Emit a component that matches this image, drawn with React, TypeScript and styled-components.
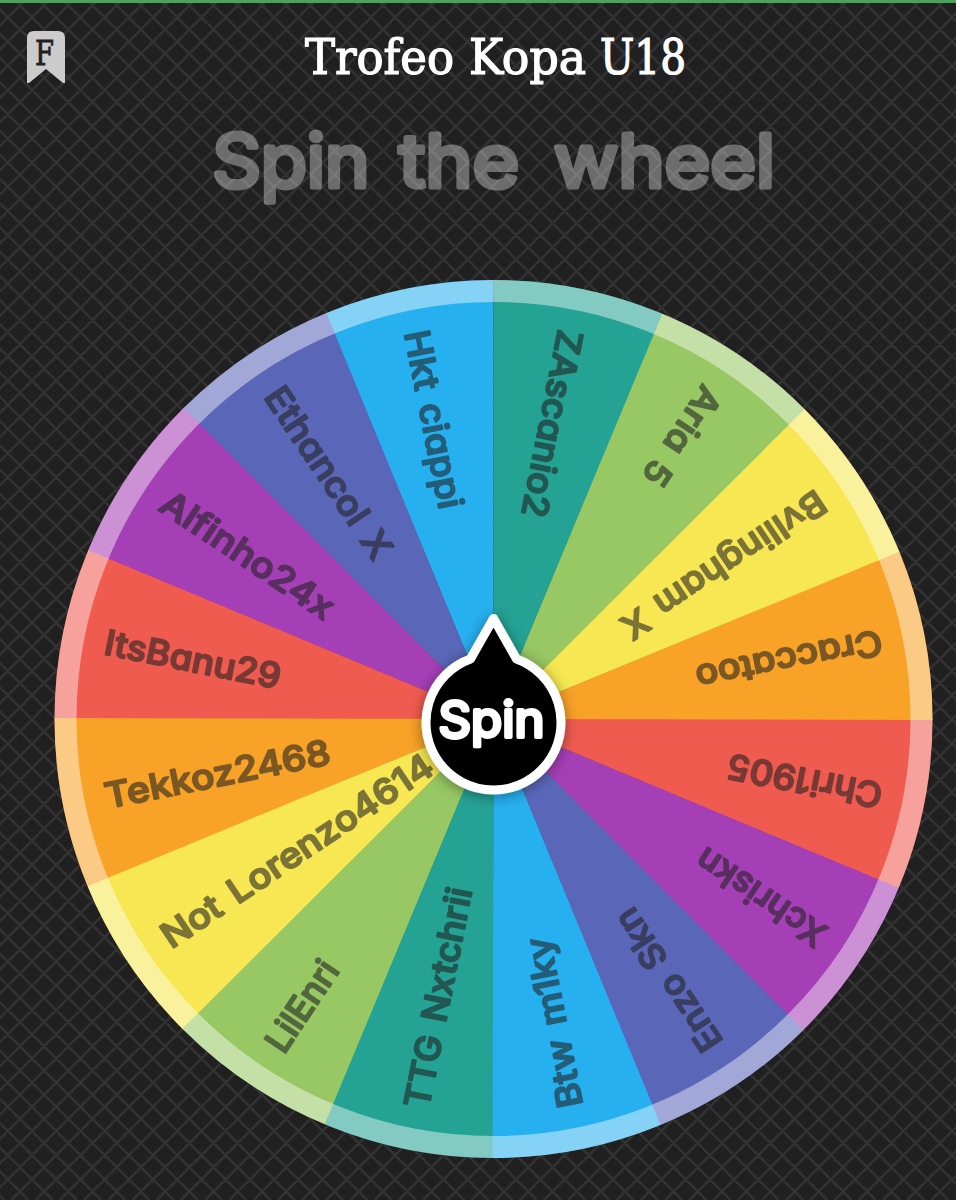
import React from "react";
import styled, { createGlobalStyle } from "styled-components";

const Global = createGlobalStyle`
  * { box-sizing: border-box; }
  body { margin: 0; background: #202020; }
`;

const Page = styled.main`
  position: relative;
  isolation: isolate;
  width: 956px;
  height: 1200px;
  overflow: hidden;
  display: flex;
  flex-direction: column;
  border-top: 3px solid #49a35a;
  background: #202020;
`;

const Weave = styled.svg`
  position: absolute;
  inset: -3px 0 0 0;
  z-index: -1;
  width: 956px;
  height: 1200px;
`;

const Header = styled.header`
  display: flex;
  align-items: flex-start;
  height: 107px;
  padding: 28px 27px 0;
`;

const Bookmark = styled.svg`
  flex: none;
  width: 38px;
  height: 53px;
`;

const Title = styled.svg`
  flex: none;
  width: 600px;
  height: 76px;
  margin-left: 132px;
  margin-top: -8px;
  overflow: visible;
  font-family: "Roboto Slab", "DejaVu Serif Condensed", "DejaVu Serif", serif;
  font-stretch: condensed;
`;

const Tagline = styled.svg`
  display: block;
  flex: none;
  width: 956px;
  height: 150px;
  opacity: 0.34;
  font-family: Inter, sans-serif;
  font-weight: 400;
`;

const Wheel = styled.svg`
  display: block;
  flex: none;
  width: 956px;
  height: 940px;
  font-family: Inter, sans-serif;
  font-feature-settings: "cv11";
`;

const Label = styled.text`
  font-size: 35px;
  font-weight: 500;
  word-spacing: 4px;
  fill: #222;
  stroke: #222;
  stroke-width: 1.9px;
  stroke-linecap: round;
  stroke-linejoin: round;
`;

const SpinText = styled.text`
  font-size: 49px;
  font-weight: 400;
  fill: #fff;
  stroke: #fff;
  stroke-width: 3.8px;
  stroke-linejoin: round;
`;

const teal = "#24a294", lime = "#97c864", yellow = "#f7e752", orange = "#f8a227";
const red = "#f05b50", purple = "#a53fb6", indigo = "#5a67b9", sky = "#27b0f0";

const slices: [string, string, number][] = [
  ["ZAscanio2", teal, 190], ["Aria 5", lime, 112], ["Bvllingham X", yellow, 238],
  ["Craccatoo", orange, 189], ["Chri1905", red, 157], ["Xchriskn", purple, 149],
  ["Enzo Skn", indigo, 164], ["Btw m1ky", sky, 173], ["TTG Nxtchrii", teal, 224],
  ["LilEnri", lime, 102], ["Not Lorenzo4614", yellow, 319], ["Tekkoz2468", orange, 229],
  ["ItsBanu29", red, 179], ["Alfinho24x", purple, 201], ["Ethancol X", indigo, 199],
  ["Hkt ciappi", sky, 181],
];

const point = (r: number, deg: number) => {
  const a = (deg * Math.PI) / 180;
  return `${(r * Math.sin(a)).toFixed(2)} ${(-r * Math.cos(a)).toFixed(2)}`;
};
// Each wedge runs a hair under its neighbour so no seam shows between them
const wedge = (r: number, i: number) => {
  const overlap = i < 15 ? 0.12 : 0;
  return `M0 0L${point(r, i * 22.5)}A${r} ${r} 0 0 1 ${point(r, (i + 1) * 22.5 + overlap)}Z`;
};

// Diagonal threads crossing every 24.21px
const step = 24.21;
const threads = Array.from({ length: 92 }, (_, i) => {
  const down = 14.6 + (i - 51) * step;
  const up = 25.2 + (i - 1) * step;
  return `M${down} 0l1200 1200M${up} 0l-1200 1200`;
}).join("");

export default function App() {
  return (
    <>
      <Global />
      <Page>
        <Weave viewBox="0 0 956 1200">
          <path d={threads} stroke="#323232" strokeWidth="2.6" />
        </Weave>
        <Header>
          <Bookmark viewBox="0 0 38 53">
            <path d="M0 7Q0 0 7 0H31Q38 0 38 7V52H36L19 38L2 52H0Z" fill="#cbcbcb" />
            <text x="8" y="33.5" fontSize="33" textLength="19" lengthAdjust="spacingAndGlyphs" fontFamily="DejaVu Serif, serif" fill="#202020" stroke="#202020" strokeWidth="0.8">F</text>
          </Bookmark>
          <Title viewBox="197 0 600 76">
            <g fontSize="48.5" fill="#fff" stroke="#fff" strokeWidth="1.2">
              <text x="305" y="51" textLength="149" lengthAdjust="spacingAndGlyphs">Trofeo</text>
              <text x="469" y="51" textLength="117" lengthAdjust="spacingAndGlyphs">Kopa</text>
              <text x="600" y="51" textLength="86" lengthAdjust="spacingAndGlyphs">U18</text>
            </g>
          </Title>
        </Header>
        <Tagline viewBox="0 110 956 150">
          <g fill="#fff" stroke="#fff" strokeWidth="5.2" strokeLinejoin="round" fontSize="73">
            <text x="212.5" y="187" textLength="157" lengthAdjust="spacingAndGlyphs">Spin</text>
            <text x="399" y="187" textLength="120" lengthAdjust="spacingAndGlyphs">the</text>
            <text x="554" y="187" textLength="221" lengthAdjust="spacingAndGlyphs">wheel</text>
          </g>
        </Tagline>
        <Wheel viewBox="0 260 956 940">
          <defs>
            <filter id="shade" x="-30%" y="-30%" width="160%" height="160%">
              <feDropShadow dx="0" dy="2" stdDeviation="7" floodColor="#000" floodOpacity="0.4" />
            </filter>
          </defs>
          <g transform="translate(493.5 719)">
            {slices.map(([name, color], i) => ({ name, color, i })).reverse().map(({ name, color, i }) => (
              <path key={name} d={wedge(439, i)} fill={color} />
            ))}
            <circle r="428" fill="none" stroke="#fff" strokeOpacity="0.43" strokeWidth="22" />
            {slices.map(([name, , length], i) => (
              <g key={name} transform={`rotate(${i * 22.5 + 101.25}) translate(-396 12.5)`} opacity="0.58">
                <Label textLength={length} lengthAdjust="spacingAndGlyphs">{name}</Label>
              </g>
            ))}
            <g filter="url(#shade)">
              <path d="M-23 -62L0 -102.5L23 -62A67.5 67.5 0 1 1 -23 -62Z" transform="translate(0 2)" fill="#000" stroke="#fff" strokeWidth="9" strokeLinejoin="round" />
            </g>
            <SpinText x="-55" y="17.5" textLength="106" lengthAdjust="spacingAndGlyphs">Spin</SpinText>
          </g>
        </Wheel>
      </Page>
    </>
  );
}
